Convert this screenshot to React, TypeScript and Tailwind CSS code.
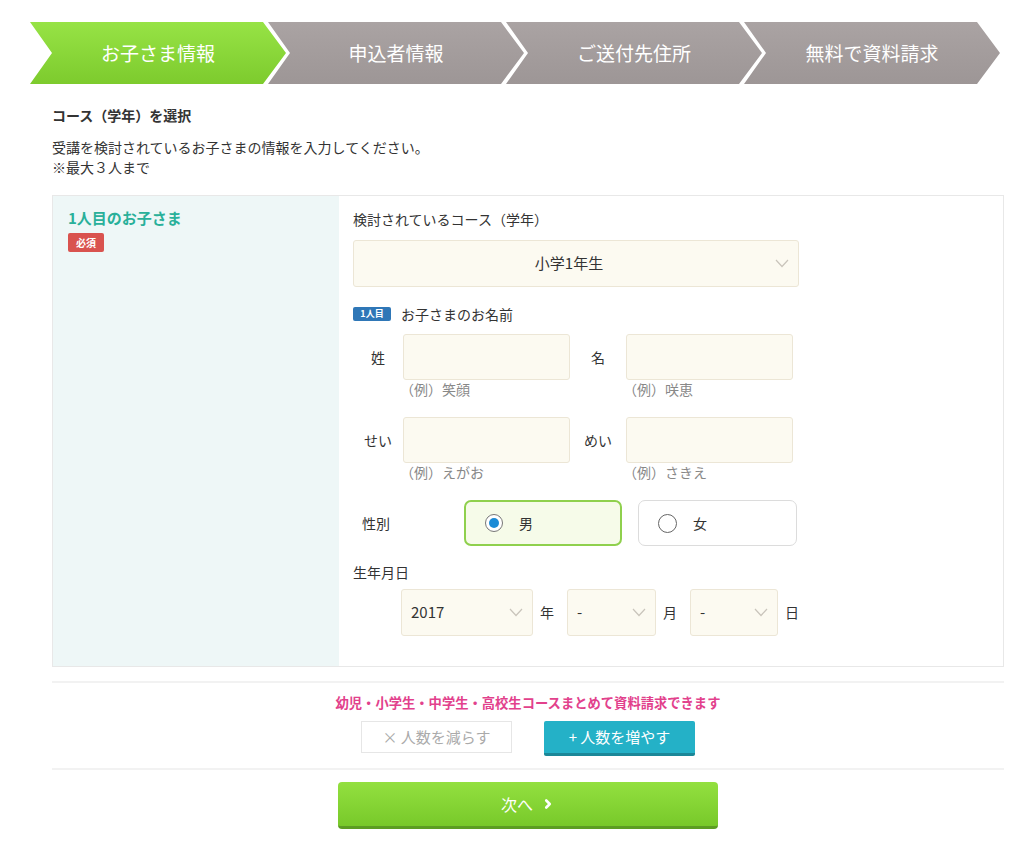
import { ChevronRight } from 'lucide-react';

const steps = ['お子さま情報', '申込者情報', 'ご送付先住所', '無料で資料請求'];

function Chevron() {
  return (
    <svg width="14" height="9" viewBox="0 0 14 9" className="shrink-0">
      <polyline points="1,1 7,7.5 13,1" fill="none" stroke="#c9c4bb" strokeWidth="1.2" />
    </svg>
  );
}

function SelectBox({ value, className, center }: { value: string; className: string; center?: boolean }) {
  return (
    <div
      className={`flex h-[47px] items-center rounded-[3px] border border-[#ece6d6] bg-[#fcfaf1] px-[9px] text-[15px] text-[#333] ${className}`}
    >
      <span className={center ? 'flex-1 text-center' : 'flex-1'}>{value}</span>
      <Chevron />
    </div>
  );
}

function TextBox() {
  return <div className="h-[46px] w-[167px] rounded-[3px] border border-[#ece6d6] bg-[#fcfaf1]" />;
}

export default function App() {
  return (
    <main className="min-h-screen bg-white font-['Noto_Sans_CJK_JP','Liberation_Sans',sans-serif] text-[14px] text-[#333]">
      <div className="pt-[22px] pl-[30px]">
        <div className="flex">
          {steps.map((s, i) => (
            <div
              key={s}
              className={`flex h-[62px] w-[256px] shrink-0 items-center justify-center text-[19px] text-white [clip-path:polygon(0_0,calc(100%-23px)_0,100%_50%,calc(100%-23px)_100%,0_100%,22px_50%)] ${
                i === 0
                  ? 'bg-gradient-to-b from-[#97e345] to-[#7dcb2d]'
                  : '-ml-[18px] bg-gradient-to-b from-[#aaa3a3] to-[#9d9696]'
              }`}
            >
              {s}
            </div>
          ))}
        </div>
      </div>

      <div className="ml-[52px] w-[952px]">
        <h2 className="mt-[21px] text-[14px] font-bold leading-5">コース（学年）を選択</h2>
        <p className="mt-[12px] leading-5">
          受講を検討されているお子さまの情報を入力してください。
          <br />
          ※最大３人まで
        </p>

        <div className="mt-[18px] flex border border-[#e8e8e8]">
          <div className="w-[286px] shrink-0 bg-[#eef7f7] pl-[15px] pt-[12px]">
            <div className="text-[15px] font-bold leading-5 text-[#29b09a]">1人目のお子さま</div>
            <div className="mt-[5px] flex h-[19px] w-[36px] items-center justify-center rounded-[2px] bg-[#d9534f] text-[10px] font-bold text-white">
              必須
            </div>
          </div>

          <div className="flex-1 pb-[30px] pl-[14px] pt-[13px]">
            <div className="leading-5">検討されているコース（学年）</div>
            <SelectBox value="小学1年生" center className="mt-[11px] w-[446px]" />

            <div className="mt-[17px] flex h-5 items-center">
              <span className="flex h-[14px] w-[38px] items-center justify-center rounded-[2px] bg-[#2f77b7] text-[9px] font-bold text-white">
                1人目
              </span>
              <span className="ml-[10px]">お子さまのお名前</span>
            </div>

            <div className="mt-[10px] flex items-center">
              <span className="w-[50px] text-center">姓</span>
              <TextBox />
              <span className="w-[56px] text-center">名</span>
              <TextBox />
            </div>
            <div className="flex h-[19px] items-center text-[#888]">
              <span className="ml-[47px] w-[223px]">（例）笑顔</span>
              <span>（例）咲恵</span>
            </div>

            <div className="mt-[18px] flex items-center">
              <span className="w-[50px] text-center">せい</span>
              <TextBox />
              <span className="w-[56px] text-center">めい</span>
              <TextBox />
            </div>
            <div className="flex h-[19px] items-center text-[#888]">
              <span className="ml-[47px] w-[223px]">（例）えがお</span>
              <span>（例）さきえ</span>
            </div>

            <div className="mt-[18px] flex items-center">
              <span className="w-[46px] text-center">性別</span>
              <div className="ml-[65px] flex h-[46px] w-[158px] items-center rounded-[7px] border-2 border-[#8fd04d] bg-[#f6fbe9] pl-[19px]">
                <span className="flex h-[18px] w-[18px] items-center justify-center rounded-full border border-[#777] bg-white">
                  <span className="h-[10px] w-[10px] rounded-full bg-[#1b8bd6]" />
                </span>
                <span className="ml-[16px]">男</span>
              </div>
              <div className="ml-[16px] flex h-[46px] w-[159px] items-center rounded-[7px] border border-[#dcdcdc] bg-white pl-[19px]">
                <span className="h-[19px] w-[19px] rounded-full border border-[#666] bg-white" />
                <span className="ml-[16px]">女</span>
              </div>
            </div>

            <div className="mt-[16px] leading-5">生年月日</div>
            <div className="mt-[7px] flex items-center">
              <SelectBox value="2017" className="ml-[48px] w-[132px]" />
              <span className="ml-[7px] mr-[13px]">年</span>
              <SelectBox value="-" className="w-[89px]" />
              <span className="ml-[7px] mr-[13px]">月</span>
              <SelectBox value="-" className="w-[88px]" />
              <span className="ml-[7px]">日</span>
            </div>
          </div>
        </div>

        <div className="mt-[14px] h-[2px] bg-[#f2f2f2]" />
        <p className="mt-[10px] text-center text-[13.3px] font-bold leading-5 text-[#e2418c]">
          幼児・小学生・中学生・高校生コースまとめて資料請求できます
        </p>
        <div className="mt-[8px] flex justify-center gap-[32px]">
          <button className="flex h-[32px] w-[151px] items-center justify-center border border-[#e6e6e6] bg-white text-[15px] text-[#aaa]">
            × 人数を減らす
          </button>
          <button className="flex h-[35px] w-[151px] items-center justify-center rounded-[2px] border-b-[3px] border-[#1b8798] bg-[#24b1c7] text-[15px] text-white">
            + 人数を増やす
          </button>
        </div>

        <div className="mt-[12px] h-[2px] bg-[#f2f2f2]" />
        <div className="mt-[12px] flex justify-center">
          <button className="flex h-[47px] w-[380px] items-center justify-center gap-[8px] rounded-[4px] border-b-[3px] border-[#5c9d22] bg-gradient-to-b from-[#93e03f] to-[#78c92a] text-[16px] text-white">
            次へ
            <ChevronRight size={14} strokeWidth={4.5} />
          </button>
        </div>
      </div>
    </main>
  );
}
